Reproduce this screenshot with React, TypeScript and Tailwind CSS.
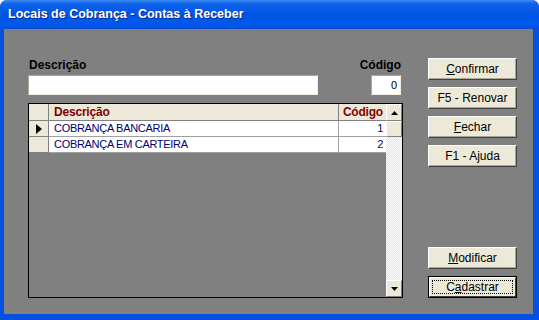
const Btn = ({ children, focused }: { children: React.ReactNode; focused?: boolean }) => {
  if (focused) {
    return (
      <div className="h-[22px] w-[89px] border border-black">
        <div className="h-full w-full bg-[#ece9d8] border-t border-l border-t-white border-l-white border-b border-r border-b-[#404040] border-r-[#404040] p-[2px]">
          <div className="flex h-full w-full items-center justify-center border border-dotted border-black text-[12px] text-black">
            {children}
          </div>
        </div>
      </div>
    );
  }
  return (
    <div className="flex h-[22px] w-[89px] items-center justify-center bg-[#ece9d8] border-t border-l border-t-white border-l-white border-b border-r border-b-[#404040] border-r-[#404040] shadow-[inset_-1px_-1px_0_#aca899] text-[12px] text-black">
      {children}
    </div>
  );
};

const rows = [
  { desc: "COBRANÇA BANCARIA", cod: 1 },
  { desc: "COBRANÇA EM CARTEIRA", cod: 2 },
];

export default function App() {
  return (
    <div className="flex h-[320px] w-[539px] flex-col overflow-hidden rounded-t-[7px] bg-[#0450e0] font-['Liberation_Sans',Arial,sans-serif]">
      {/* title bar */}
      <div className="flex h-[29px] items-center pl-[8px] bg-[linear-gradient(to_bottom,#3d8cf5_0%,#1063ea_12%,#0054e3_50%,#0059ee_85%,#0a4ccf_100%)]">
        <span className="text-[12.5px] font-bold text-white [text-shadow:1px_1px_#0a2a8a]">
          Locais de Cobrança - Contas à Receber
        </span>
      </div>

      {/* body */}
      <div className="ml-[4px] mr-[6px] mb-[6px] flex flex-1 bg-[#808080] pt-[29px] pb-[16px]">
        <div className="ml-[24px] flex w-[375px] flex-col">
          <div className="flex items-end justify-between">
            <div className="flex flex-col">
              <span className="h-[14px] pl-[1px] text-[12px] font-bold leading-[15px] text-black">Descrição</span>
              <div className="mt-[3px] h-[20px] w-[290px] bg-white border-t border-l border-t-[#aca899] border-l-[#aca899] border-b border-r border-b-[#f1efe2] border-r-[#f1efe2]" />
            </div>
            <div className="mr-[2px] flex flex-col items-end">
              <span className="h-[14px] text-[12px] font-bold leading-[15px] text-black">Código</span>
              <div className="mt-[3px] flex h-[20px] w-[30px] items-center justify-end bg-white pr-[3px] text-[11px] text-black border-t border-l border-t-[#aca899] border-l-[#aca899] border-b border-r border-b-[#f1efe2] border-r-[#f1efe2]">
                0
              </div>
            </div>
          </div>

          {/* grid */}
          <div className="mt-[8px] flex flex-1 border border-black bg-[#808080]">
            <div className="flex flex-1 flex-col">
              <div className="flex h-[17px] text-[12px] font-bold tracking-[-0.2px] text-[#800000]">
                <div className="w-[20px] bg-[#ece9d8] border-r border-b border-[#808080]" />
                <div className="flex flex-1 items-center bg-[#ece9d8] pl-[5px] border-r border-b border-[#808080]">Descrição</div>
                <div className="flex w-[47px] items-center justify-end bg-[#ece9d8] pr-[3px] border-b border-[#808080]">Código</div>
              </div>
              {rows.map((r, i) => (
                <div key={r.cod} className="flex h-[16px] text-[11px] tracking-[-0.3px] text-[#000070]">
                  <div className="flex w-[20px] items-center justify-center bg-[#ece9d8] border-r border-b border-[#808080]">
                    {i === 0 && (
                      <svg width="6" height="10" viewBox="0 0 6 10">
                        <path d="M0 0 L6 5 L0 10 Z" fill="#000" />
                      </svg>
                    )}
                  </div>
                  <div className="flex flex-1 items-center bg-white pl-[5px] border-r border-b border-[#a0a0a0]">{r.desc}</div>
                  <div className="flex w-[47px] items-center justify-end bg-white pr-[3px] border-b border-[#a0a0a0]">{r.cod}</div>
                </div>
              ))}
            </div>

            {/* scrollbar */}
            <div className="flex w-[16px] flex-col">
              <div className="flex h-[17px] items-center justify-center bg-[#ece9d8] border-t border-l border-t-white border-l-white border-b border-r border-b-[#808080] border-r-[#808080]">
                <svg width="7" height="4" viewBox="0 0 7 4">
                  <path d="M0 4 L3.5 0 L7 4 Z" fill="#000" />
                </svg>
              </div>
              <div className="h-[16px] bg-[#ece9d8] border-t border-l border-t-white border-l-white border-b border-r border-b-[#808080] border-r-[#808080]" />
              <div className="flex-1 bg-[repeating-conic-gradient(#ffffff_0_25%,#e4e1d3_0_50%)] bg-[length:2px_2px]" />
              <div className="flex h-[17px] items-center justify-center bg-[#ece9d8] border-t border-l border-t-white border-l-white border-b border-r border-b-[#808080] border-r-[#808080]">
                <svg width="7" height="4" viewBox="0 0 7 4">
                  <path d="M0 0 L7 0 L3.5 4 Z" fill="#000" />
                </svg>
              </div>
            </div>
          </div>
        </div>

        {/* buttons */}
        <div className="ml-[25px] flex flex-col">
          <div className="flex flex-col gap-[7px]">
            <Btn><u>C</u>onfirmar</Btn>
            <Btn>F5 - Renovar</Btn>
            <Btn><u>F</u>echar</Btn>
            <Btn>F1 - Ajuda</Btn>
          </div>
          <div className="mt-auto flex flex-col gap-[7px]">
            <Btn><u>M</u>odificar</Btn>
            <Btn focused>C<u>a</u>dastrar</Btn>
          </div>
        </div>
      </div>
    </div>
  );
}
